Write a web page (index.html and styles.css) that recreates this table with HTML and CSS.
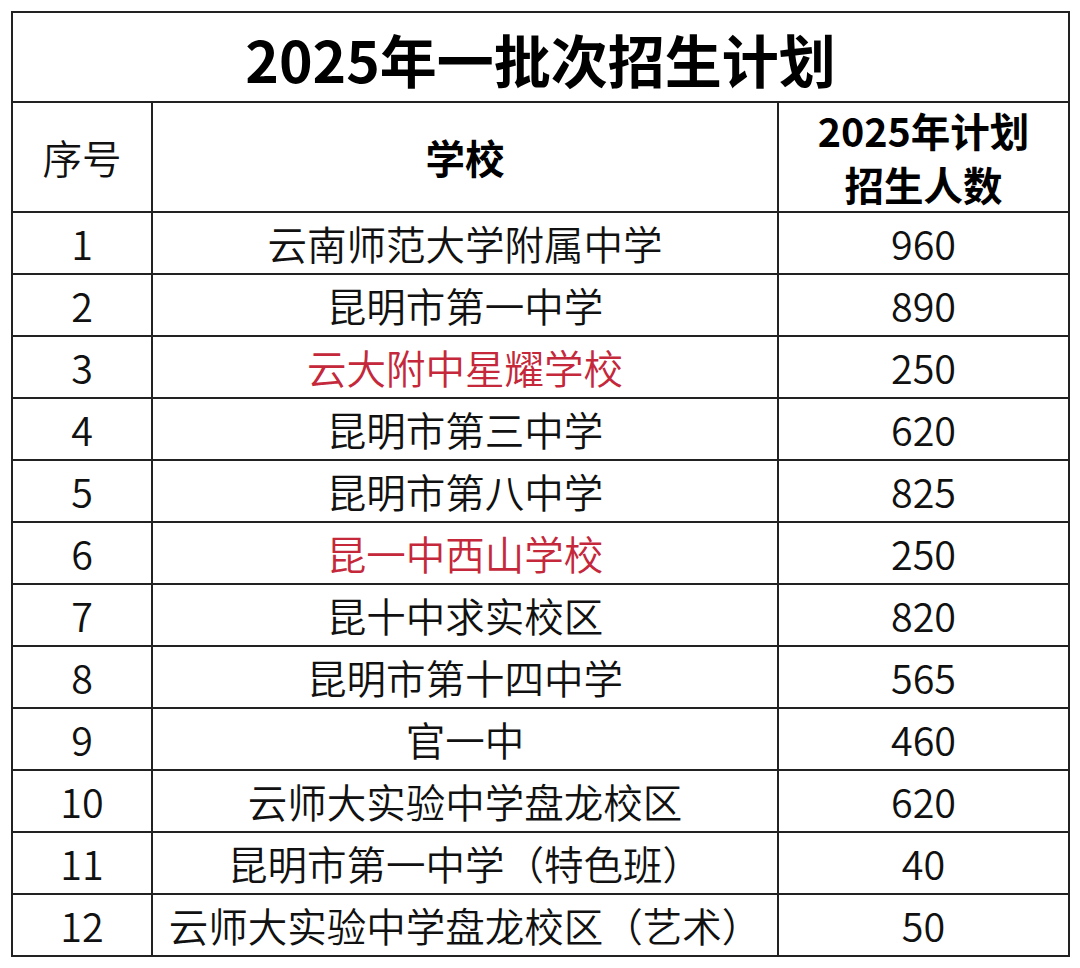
FILE: index.html
```html
<!DOCTYPE html>
<html lang="zh-CN">
<head>
<meta charset="utf-8">
<link rel="stylesheet" href="styles.css">
</head>
<body>
<table class="plan">
  <colgroup>
    <col class="c-no">
    <col class="c-school">
    <col class="c-num">
  </colgroup>
  <tr class="title-row"><td colspan="3" class="title">2025年一批次招生计划</td></tr>
  <tr class="head-row">
    <td class="h-no">序号</td>
    <td class="h-bold">学校</td>
    <td class="h-bold h-two">2025年计划<br>招生人数</td>
  </tr>
  <tr><td>1</td><td>云南师范大学附属中学</td><td>960</td></tr>
  <tr><td>2</td><td>昆明市第一中学</td><td>890</td></tr>
  <tr><td>3</td><td class="red">云大附中星耀学校</td><td>250</td></tr>
  <tr><td>4</td><td>昆明市第三中学</td><td>620</td></tr>
  <tr><td>5</td><td>昆明市第八中学</td><td>825</td></tr>
  <tr><td>6</td><td class="red">昆一中西山学校</td><td>250</td></tr>
  <tr><td>7</td><td>昆十中求实校区</td><td>820</td></tr>
  <tr><td>8</td><td>昆明市第十四中学</td><td>565</td></tr>
  <tr><td>9</td><td>官一中</td><td>460</td></tr>
  <tr><td>10</td><td>云师大实验中学盘龙校区</td><td>620</td></tr>
  <tr><td>11</td><td>昆明市第一中学（特色班）</td><td>40</td></tr>
  <tr><td>12</td><td>云师大实验中学盘龙校区（艺术）</td><td>50</td></tr>
</table>
</body>
</html>
```
FILE: styles.css
```css
html, body {
  margin: 0;
  padding: 0;
  background: #ffffff;
}
body {
  font-family: "Noto Sans CJK SC", "Noto Sans", sans-serif;
  color: #111111;
}
.plan {
  border-collapse: collapse;
  margin: 11px 0 0 11px;
  table-layout: fixed;
  width: 1057px;
}
.c-no { width: 140px; }
.c-school { width: 626px; }
.c-num { width: 291px; }
.plan td {
  border: 2px solid #222222;
  text-align: center;
  vertical-align: middle;
  height: 60px;
  padding: 0;
  font-size: 39.5px;
  font-weight: 350;
  line-height: 1;
  white-space: nowrap;
}
.plan .title-row td {
  height: 86px;
  font-size: 57px;
  font-weight: 700;
  color: #000;
  padding-top: 2px;
}
.plan .head-row td {
  height: 108px;
}
.plan .h-bold {
  font-weight: 700;
  color: #000;
}
.plan .h-two {
  line-height: 54px;
}
.plan .red {
  color: #c4283a;
}
```
